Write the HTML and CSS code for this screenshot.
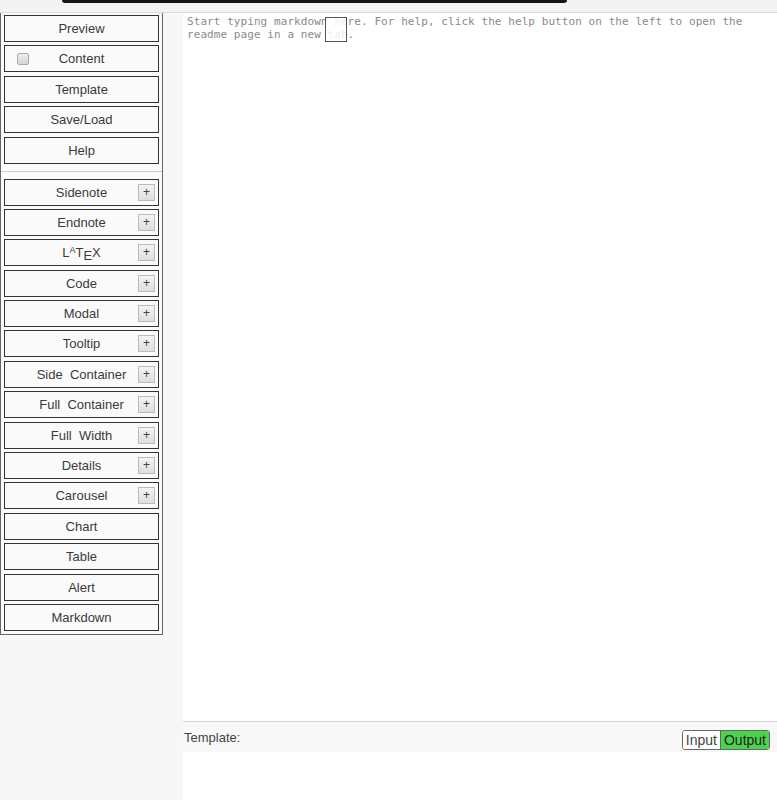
FILE: index.html
```html
<!DOCTYPE html>
<html lang="en">
<head>
    <meta charset="UTF-8">
    <meta name="viewport" content="width=device-width, initial-scale=1.0">
    <title>Markdown Editor</title>
    <link rel="stylesheet" href="styles.css">
</head>
<body>
    <div class="topbar">
        <div class="notch"></div>
    </div>
    <div class="layout">
        <div class="side">
            <div class="panel">
                <div class="btn">Preview</div>
                <div class="btn"><span class="check"></span>Content</div>
                <div class="btn">Template</div>
                <div class="btn">Save/Load</div>
                <div class="btn">Help</div>

                <hr class="divider">

                <div class="btn">Sidenote<span class="plus">+</span></div>
                <div class="btn">Endnote<span class="plus">+</span></div>
                <div class="btn"><span class="latex">L<span class="la">A</span>T<span class="le">E</span>X</span><span class="plus">+</span></div>
                <div class="btn">Code<span class="plus">+</span></div>
                <div class="btn">Modal<span class="plus">+</span></div>
                <div class="btn">Tooltip<span class="plus">+</span></div>
                <div class="btn">Side&nbsp; Container<span class="plus">+</span></div>
                <div class="btn">Full&nbsp; Container<span class="plus">+</span></div>
                <div class="btn">Full&nbsp; Width<span class="plus">+</span></div>
                <div class="btn">Details<span class="plus">+</span></div>
                <div class="btn">Carousel<span class="plus">+</span></div>
                <div class="btn">Chart</div>
                <div class="btn">Table</div>
                <div class="btn">Alert</div>
                <div class="btn">Markdown</div>
            </div>
        </div>

        <div class="main">
            <div class="editor">
                <div class="placeholder">Start typing markdown here. For help, click the help button on the left to open the<br>readme page in a new tab.</div>
                <!-- caret box -->
                <div class="caret"></div>
            </div>
            <div class="statusbar">
                <span>Template:</span>
                <div class="toggle">
                    <span class="opt">Input</span>
                    <span class="opt active">Output</span>
                </div>
            </div>
            <div class="footer"></div>
        </div>
    </div>
</body>
</html>
```

FILE: styles.css
```css
body {
    font-family: 'Liberation Sans', Arial, sans-serif;
    background-color: #f7f7f7;
    margin: 0;
    padding: 0;
}

.topbar {
    height: 12px;
    background-color: #f3f3f3;
    border-bottom: 1px solid #dcdcdc;
}

.notch {
    margin-left: 62px;
    width: 505px;
    height: 3px;
    background: #151515;
    border-radius: 0 0 8px 8px;
}

.layout {
    display: flex;
    height: 787px;
}

/* Sidebar */
.side {
    width: 183px;
    flex-shrink: 0;
}

.panel {
    width: 155px;
    padding: 2px 3px 3px 3px;
    border: 1px solid #666;
    border-top: none;
    background: #fafafa;
    display: flex;
    flex-direction: column;
    gap: 3.4px;
}

.btn {
    position: relative;
    height: 25px;
    border: 1px solid #333;
    background: #fafafa;
    color: #3a3a3a;
    font-size: 13px;
    line-height: 25px;
    text-align: center;
}

.check {
    position: absolute;
    left: 12px;
    top: 7px;
    width: 10px;
    height: 10px;
    border: 1px solid #aaa;
    border-radius: 2px;
    background: linear-gradient(#eee, #d5d5d5);
}

.plus {
    position: absolute;
    right: 3px;
    top: 4px;
    width: 15px;
    height: 15px;
    border: 1px solid #bbb;
    background: linear-gradient(#f4f4f4, #dedede);
    font-size: 12px;
    line-height: 14px;
    color: #444;
}

.latex {
    font-size: 13px;
}

.la {
    font-size: 9px;
    position: relative;
    top: -4px;
}

.le {
    position: relative;
    top: 3px;
}

.divider {
    border: none;
    border-top: 1px solid #ccc;
    margin: 3.6px -3px;
}

/* Main area */
.main {
    flex: 1;
    display: flex;
    flex-direction: column;
    background: white;
}

.editor {
    position: relative;
    height: 704px;
    padding: 2px 4px;
}

.placeholder {
    font-family: 'DejaVu Sans Mono', monospace;
    font-size: 11px;
    line-height: 13px;
    color: #8a8a8a;
    letter-spacing: 0.07px;
}

.caret {
    position: absolute;
    left: 142px;
    top: 4px;
    width: 20px;
    height: 23px;
    border: 1px solid #555;
    background: rgba(255, 255, 255, 0.85);
}

.statusbar {
    height: 30px;
    border-top: 1px solid #d4d4d4;
    background: #f8f8f8;
    display: flex;
    align-items: center;
    justify-content: space-between;
    padding: 0 7px 0 1px;
    font-size: 13px;
    color: #444;
}

.toggle {
    display: flex;
    border: 1px solid #666;
    border-radius: 3px;
    overflow: hidden;
    font-size: 14px;
    margin-top: 5px;
}

.opt {
    padding: 1px 3px;
    background: white;
    color: #444;
}

.opt.active {
    background: #4cd34c;
    color: #222;
    border-left: 1px solid #666;
}

.footer {
    flex: 1;
    background: white;
}
```
